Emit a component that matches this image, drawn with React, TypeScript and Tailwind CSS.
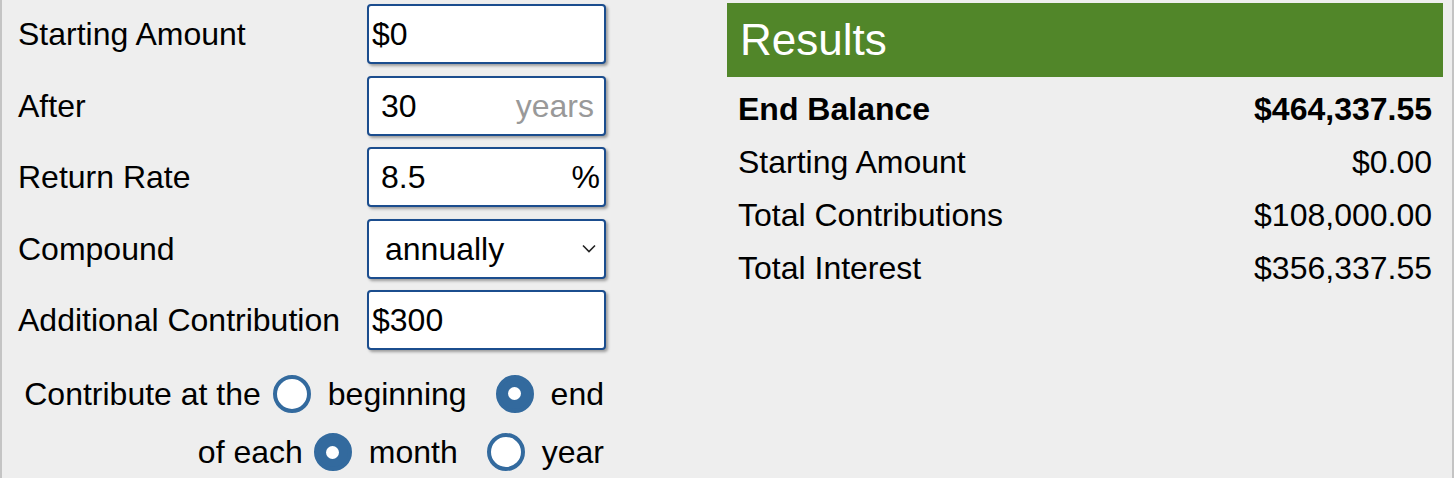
import React from "react";

const font = { fontFamily: '"Liberation Sans", Arial, sans-serif' };

function Field({
  label,
  value,
  suffix,
  suffixClass = "text-[#999999] pr-[10px]",
  pad = "pl-[12px]",
}: {
  label: string;
  value: string;
  suffix?: string;
  suffixClass?: string;
  pad?: string;
}) {
  return (
    <div className="flex h-[60px] items-center">
      <div className="w-[365px] pl-[16px]">{label}</div>
      <div
        className={`flex h-[60px] w-[239px] items-center justify-between rounded-[4px] border-2 border-[#1b4d8e] bg-white shadow-[2px_2px_3px_rgba(0,0,0,0.35)] ${pad}`}
      >
        <span>{value}</span>
        {suffix && <span className={suffixClass}>{suffix}</span>}
      </div>
    </div>
  );
}

function Radio({ checked }: { checked?: boolean }) {
  return (
    <span
      className={`flex h-[38px] w-[38px] items-center justify-center rounded-full border-[4px] border-[#336a9e] ${
        checked ? "bg-[#336a9e]" : "bg-white"
      }`}
    >
      {checked && <span className="h-[13px] w-[13px] rounded-full bg-white" />}
    </span>
  );
}

export default function App() {
  return (
    <div
      className="flex h-[478px] w-[1454px] border-l-2 border-r-2 border-[#c4c4c4] bg-[#eeeeee] text-[32px] leading-none text-black"
      style={font}
    >
      {/* inputs */}
      <div className="flex w-[725px] flex-col gap-[11.5px] pt-[4px]">
        <Field label="Starting Amount" value="$0" pad="pl-[3px]" />
        <Field label="After" value="30" suffix="years" />
        <Field label="Return Rate" value="8.5" suffix="%" suffixClass="pr-[4px]" />
        <div className="flex h-[60px] items-center">
          <div className="w-[365px] pl-[16px]">Compound</div>
          <div className="flex h-[60px] w-[239px] items-center justify-between rounded-[4px] border-2 border-[#1b4d8e] bg-white pl-[16px] pr-[8px] shadow-[2px_2px_3px_rgba(0,0,0,0.35)]">
            <span>annually</span>
            <svg width="14" height="9" viewBox="0 0 14 9" fill="none">
              <path d="M1 1.5 L7 7.5 L13 1.5" stroke="#222" strokeWidth="1.6" />
            </svg>
          </div>
        </div>
        <Field label="Additional Contribution" value="$300" pad="pl-[3px]" />

        <div className="mt-[13px] flex w-[602px] items-center justify-end">
          <span>Contribute at the</span>
          <span className="ml-[12px]"><Radio /></span>
          <span className="ml-[17px]">beginning</span>
          <span className="ml-[29px]"><Radio checked /></span>
          <span className="ml-[17px]">end</span>
        </div>
        <div className="mt-[9px] flex w-[602px] items-center justify-end">
          <span>of each</span>
          <span className="ml-[11px]"><Radio checked /></span>
          <span className="ml-[17px]">month</span>
          <span className="ml-[29px]"><Radio /></span>
          <span className="ml-[17px]">year</span>
        </div>
      </div>

      {/* results */}
      <div className="w-[716px] pt-[3px]">
        <div className="flex h-[74px] items-center bg-[#518629] pl-[13px] text-[44px] text-white">
          Results
        </div>
        <div className="flex flex-col px-[11px] pt-[5px]">
          <div className="flex h-[53px] items-center justify-between font-bold">
            <span>End Balance</span>
            <span>$464,337.55</span>
          </div>
          <div className="flex h-[53px] items-center justify-between">
            <span>Starting Amount</span>
            <span>$0.00</span>
          </div>
          <div className="flex h-[53px] items-center justify-between">
            <span>Total Contributions</span>
            <span>$108,000.00</span>
          </div>
          <div className="flex h-[53px] items-center justify-between">
            <span>Total Interest</span>
            <span>$356,337.55</span>
          </div>
        </div>
      </div>
    </div>
  );
}
